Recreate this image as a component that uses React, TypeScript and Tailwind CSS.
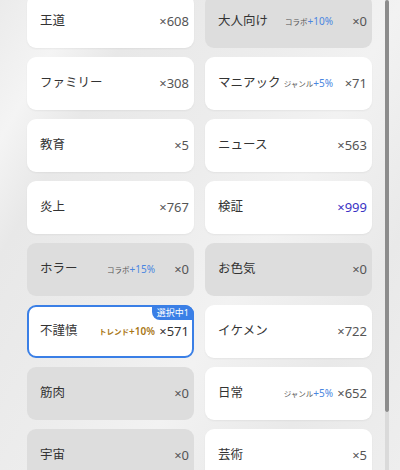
import React from "react";

type Item = {
  label: string;
  count: string;
  gray?: boolean;
  bonus?: { tag: string; value: string; kind: "blue" | "orange" };
  selected?: boolean;
  countColor?: string;
};

const items: Item[] = [
  { label: "王道", count: "×608" },
  { label: "大人向け", count: "×0", gray: true, bonus: { tag: "コラボ", value: "+10%", kind: "blue" } },
  { label: "ファミリー", count: "×308" },
  { label: "マニアック", count: "×71", bonus: { tag: "ジャンル", value: "+5%", kind: "blue" } },
  { label: "教育", count: "×5" },
  { label: "ニュース", count: "×563" },
  { label: "炎上", count: "×767" },
  { label: "検証", count: "×999", countColor: "blue" },
  { label: "ホラー", count: "×0", gray: true, bonus: { tag: "コラボ", value: "+15%", kind: "blue" } },
  { label: "お色気", count: "×0", gray: true },
  { label: "不謹慎", count: "×571", selected: true, bonus: { tag: "トレンド", value: "+10%", kind: "orange" } },
  { label: "イケメン", count: "×722" },
  { label: "筋肉", count: "×0", gray: true },
  { label: "日常", count: "×652", bonus: { tag: "ジャンル", value: "+5%", kind: "blue" } },
  { label: "宇宙", count: "×0", gray: true },
  { label: "芸術", count: "×5" },
];

function Card({ item }: { item: Item }) {
  const base = "relative h-[53px] rounded-[9px] flex items-center";
  const skin = item.selected
    ? "bg-white border-2 border-[#3a7fe6] pl-[11px] pr-[3px]"
    : item.gray
    ? "bg-[#dddddd] pl-[13px] pr-[5px]"
    : "bg-white shadow-[0_1px_2px_rgba(0,0,0,0.05)] pl-[13px] pr-[5px]";
  return (
    <div className={`${base} ${skin}`}>
      {item.selected && (
        <div className="absolute top-[-2px] right-[-2px] h-[15px] px-[5px] rounded-bl-[8px] rounded-tr-[9px] bg-[#3a7fe6] text-white text-[9px] leading-[15px]">
          選択中1
        </div>
      )}
      <span className="flex-1 text-[12.5px] text-[#333] whitespace-nowrap">{item.label}</span>
      {item.bonus && (
        <span className="flex items-baseline whitespace-nowrap mr-[4px]">
          <span
            className={`text-[7.5px] ${
              item.bonus.kind === "orange" ? "text-[#a87614] font-semibold" : "text-[#555]"
            }`}
          >
            {item.bonus.tag}
          </span>
          <span
            className={`text-[10px] ${
              item.bonus.kind === "orange" ? "text-[#a87614] font-semibold" : "text-[#4a86e0]"
            }`}
          >
            {item.bonus.value}
          </span>
        </span>
      )}
      <span
        className={`min-w-[30px] text-right whitespace-nowrap text-[13px] ${
          item.countColor === "blue"
            ? "text-[#3a33c4]"
            : item.selected
            ? "text-[#333]"
            : "text-[#555]"
        }`}
      >
        {item.count}
      </span>
    </div>
  );
}

export default function App() {
  return (
    <div
      className="w-[400px] h-[470px] overflow-hidden flex bg-[#ebebeb] bg-[linear-gradient(120deg,#ebebeb_0%,#f4f4f4_12%,#e8e8e8_22%,#ededed_45%,#f2f2f2_60%,#e9e9e9_80%,#eeeeee_100%)]"
      style={{ fontFamily: '"Noto Sans", "Noto Sans CJK JP", sans-serif' }}
    >
      <div className="pl-[27px] mt-[-5px]">
        <div className="grid grid-cols-[167px_167px] gap-x-[11px] gap-y-[9px]">
          {items.map((it, i) => (
            <Card key={i} item={it} />
          ))}
        </div>
      </div>
      <div className="ml-[13px] w-[4px] h-full flex flex-col">
        <div className="h-[412px] bg-[#8c8c8c] rounded-full"></div>
        <div className="flex-1 bg-[#dadada]"></div>
      </div>
    </div>
  );
}
